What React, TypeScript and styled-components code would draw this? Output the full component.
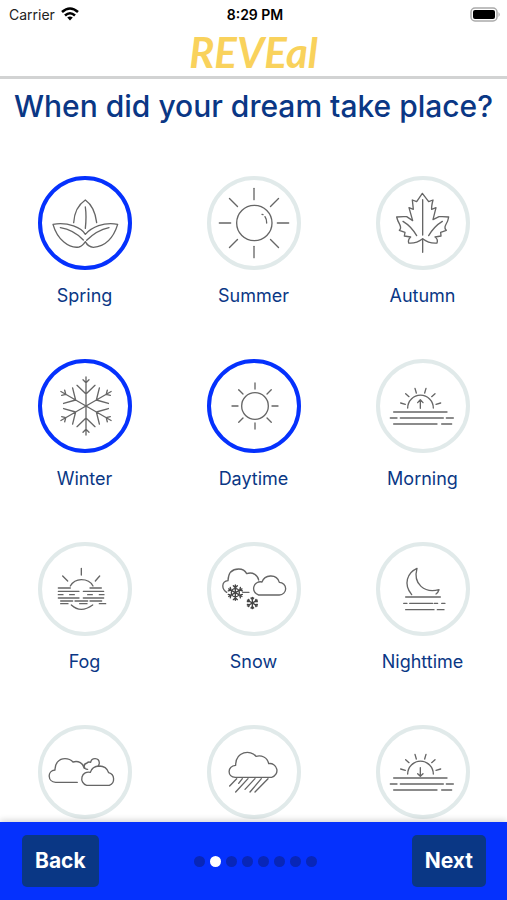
import React, { useState } from "react";
import styled, { createGlobalStyle } from "styled-components";

const GlobalStyle = createGlobalStyle`
  * { box-sizing: border-box; }
  body { margin: 0; background: #fff; font-family: Inter, "Liberation Sans", sans-serif; }
  button { font-family: inherit; border: 0; cursor: pointer; }
`;

const navy = "#0a3785";
const blue = "#0531fd";

const Screen = styled.div`
  display: flex;
  flex-direction: column;
  height: 100vh;
  overflow: hidden;
`;

const StatusBar = styled.div`
  display: grid;
  grid-template-columns: 1fr auto 1fr;
  align-items: center;
  height: 28px;
  padding: 0 6px 0 9px;
  font-size: 14px;
  color: #222;
`;

const Carrier = styled.span`
  display: flex;
  align-items: center;
  gap: 6px;
`;

const Clock = styled.time`
  font-weight: 600;
  color: #000;
`;

const Battery = styled.svg`
  justify-self: end;
`;

const Brand = styled.header`
  display: flex;
  justify-content: center;
  border-bottom: 3px solid #d2d3d3;
`;

const Wordmark = styled.span`
  font-family: Lato, sans-serif;
  font-style: italic;
  font-weight: 700;
  font-size: 42px;
  line-height: 48px;
  color: #f9d25c;
`;

const Content = styled.main`
  flex: 1;
  min-height: 0;
  overflow-y: auto;
  scrollbar-width: none;
  padding: 7px 0 50px;
`;

const Title = styled.h1`
  margin: 0 0 50px;
  font-size: 30px;
  line-height: 40px;
  font-weight: 500;
  text-align: center;
  color: ${navy};
`;

const Choices = styled.div`
  display: grid;
  grid-template-columns: repeat(3, 1fr);
  row-gap: 50px;
  justify-items: center;
`;

const Choice = styled.button`
  display: flex;
  flex-direction: column;
  align-items: center;
  gap: 13px;
  padding: 0;
  background: none;
  font-size: 18px;
  line-height: 26px;
  color: ${navy};
`;

const Ring = styled.span<{ $selected: boolean }>`
  display: flex;
  width: 94px;
  height: 94px;
  border-radius: 50%;
  border: 4px solid ${(p) => (p.$selected ? blue : "#e1eaea")};
`;

const Drawing = styled.svg`
  flex: 1;
  fill: none;
  stroke: #666;
  stroke-width: 4;
  stroke-linecap: round;
  stroke-linejoin: round;
`;

const Footer = styled.footer`
  position: relative;
  display: flex;
  align-items: center;
  justify-content: space-between;
  padding: 13px 21px 13px 22px;
  background: ${blue};
  box-shadow: 0 -2px 6px rgba(0, 0, 0, 0.16);
`;

const NavButton = styled.button`
  padding: 13px;
  border-radius: 5px;
  background: ${navy};
  color: #fff;
  font-size: 21px;
  line-height: 26px;
  font-weight: 700;
`;

const Dots = styled.div`
  display: flex;
  gap: 5px;
`;

const Dot = styled.span<{ $current: boolean }>`
  width: 11px;
  height: 11px;
  border-radius: 50%;
  background: ${(p) => (p.$current ? "#fff" : "#0826b8")};
`;

const range = (n: number) => Array.from({ length: n }, (_, i) => i);

const rays = (cx: number, cy: number, inner: number, outer: number) =>
  range(8).map((i) => (
    <path key={i} d={`M${cx} ${cy - inner}V${cy - outer}`} transform={`rotate(${i * 45} ${cx} ${cy})`} />
  ));

const flake = (cx: number, cy: number, arm: string) =>
  range(6).map((i) => <path key={i} d={arm} transform={`translate(${cx} ${cy}) rotate(${i * 60})`} />);

const horizonLines = (
  <>
    <path d="M-88 18H72M-98 36H-78M-68 36H61M70 36H91M-88 54H42M56 54H86" />
    <path d="M-46 6A38 38 0 0 1 31 6M-67 -9L-53 -5M-52 -37L-42 -28M-24 -53L-20 -39M9 -53L5 -39M36 -37L26 -28M53 -9L39 -5" />
  </>
);

const drawings: Record<string, React.ReactNode> = {
  Spring: (
    <>
      <path d="M-34 -1C-32 -33 -20 -55 1 -69C22 -54 31 -35 35 -1M1 -48Q5 -20 1 16" />
      <path d="M1 34C-10 15 -50 -4 -96 4C-83 50 -48 77 -18 72Q-8 70 1 56Q9 72 25 73C62 70 86 43 98 4C56 -4 20 13 1 34Z" />
      <path d="M-74 14Q-35 20 -5 51M72 14Q35 22 5 52" />
    </>
  ),
  Summer: (
    <>
      <circle r="53" cx="1" />
      {rays(0, 0, 70, 104)}
      <path d="M24 -26L27 -25M33 -19Q38 -12 38 0" />
    </>
  ),
  Autumn: (
    <>
      <path d="M-2 -89L17 -64L30 -69Q25 -50 26 -41L39 -46L30 -10L48 -19Q62 -20 77 -18Q76 -8 68 6Q63 16 70 22L53 28L54 39L36 42Q46 49 42 60Q18 62 -1 47Q-20 62 -43 60Q-46 50 -37 42L-56 39L-54 28L-71 22Q-64 16 -70 4Q-77 -8 -79 -18Q-62 -20 -49 -19L-31 -7L-42 -46L-29 -41L-32 -69L-19 -64Z" />
      <path d="M-1 -70V36M-1 48V88M-60 -5Q-35 10 -19 38M58 -5Q33 10 17 38" />
    </>
  ),
  Winter: flake(3, 0, "M0 0V-87M0 -36L-27 -62M0 -36L27 -62M0 -70L-9 -79M0 -70L9 -79"),
  Daytime: (
    <>
      <circle r="40" cx="3" />
      {rays(3, 0, 51, 69)}
    </>
  ),
  Morning: (
    <>
      {horizonLines}
      <path d="M-8 7V-18M-16 -10L-8 -19L0 -10" />
    </>
  ),
  Fog: (
    <>
      <path d="M-44 -9Q-33 -28 -11 -28Q14 -28 24 -9M-41 48Q-13 74 23 48M-11 -62V-42M-67 -39L-52 -24M44 -39L31 -24" />
      <path d="M-80 -3H-44M15 -3H49M-80 7H-18M-5 7H56M-80 17H-66M-46 17H-32M8 17H22M43 17H57M-80 27H-18M-5 27H56M-73 36H-37M-30 36H8M15 36H50M-73 44H-51M-16 44H6M43 44H62" />
    </>
  ),
  Snow: (
    <>
      <path d="M-82 10C-98 0 -98 -23 -78 -25C-77 -51 -62 -60 -46 -60Q-29 -60 -22 -46C-3 -53 12 -40 14 -27M-34 10H-15" />
      <path d="M14 18H76A19 19 0 0 0 76 -20Q70 -40 49 -39Q30 -38 24 -21A20 20 0 0 0 14 18Z" />
      <g stroke="#444">
        <circle cx="-56" cy="11" r="12" />
        {flake(-56, 11, "M0 0V-23M0 -15L-6 -21M0 -15L6 -21")}
        {flake(-5, 42, "M0 0V-17M0 -10L-4 -15M0 -10L4 -15")}
      </g>
    </>
  ),
  Nighttime: (
    <>
      <path d="M-34 17C-60 -15 -47 -49 -18 -62C-31 -15 5 14 48 2Q45 11 39 15" />
      <path d="M-52 24H52M-58 43H-48M-40 43H29M34 43H44M56 43H66M-52 62H33M43 62H63" />
    </>
  ),
  Cloudy: (
    <>
      <path d="M-23 31H-88C-113 29 -114 -4 -90 -6C-91 -26 -78 -40 -60 -40Q-45 -40 -36 -30C-20 -35 -5 -26 -2 -11" />
      <path d="M8 -8C-5 -8 -6 -24 6 -27Q10 -32 17 -29C20 -44 42 -44 43 -27Q43 -23 40 -19" />
      <path d="M5 40H73A20 20 0 0 0 71 2Q64 -18 43 -18Q21 -17 16 1A20 20 0 0 0 5 40Z" />
    </>
  ),
  Rain: (
    <>
      <path d="M-56 16H53A21 21 0 0 0 44 -25C40 -45 22 -51 6 -47C-10 -68 -55 -62 -55 -20C-81 -17 -81 15 -56 16Z" />
      <path d="M-52 20L-73 42M-35 20L-46 34M-18 20L-55 60M3 20L-27 52M22 20L-12 60M42 20L3 60" />
    </>
  ),
  Evening: (
    <>
      {horizonLines}
      <path d="M-8 -13V12M-16 5L-8 13L0 5" />
    </>
  ),
};

const captioned = ["Spring", "Summer", "Autumn", "Winter", "Daytime", "Morning", "Fog", "Snow", "Nighttime"];
const names = [...captioned, "Cloudy", "Rain", "Evening"];

export default function App() {
  const [selected, setSelected] = useState(["Spring", "Winter", "Daytime"]);
  const toggle = (name: string) =>
    setSelected((s) => (s.includes(name) ? s.filter((n) => n !== name) : [...s, name]));

  return (
    <Screen>
      <GlobalStyle />
      <StatusBar>
        <Carrier>
          Carrier
          <svg width="18" height="14" viewBox="0 0 18 14" fill="none" stroke="#000" strokeWidth="2.6">
            <path d="M1 5Q9 -2 17 5M4 8.5Q9 4 14 8.5" />
            <path d="M6.2 10.6Q9 8.4 11.8 10.6L9 13.6Z" fill="#000" stroke="none" />
          </svg>
        </Carrier>
        <Clock>8:29 PM</Clock>
        <Battery width="31" height="15" viewBox="0 0 31 15">
          <rect x="1" y="1" width="26" height="13" rx="4" fill="#fff" stroke="#aaa" strokeWidth="1.5" />
          <rect x="3" y="3" width="22" height="9" rx="2" />
          <path d="M28.5 5Q31 7.5 28.5 10Z" fill="#aaa" />
        </Battery>
      </StatusBar>
      <Brand>
        <Wordmark>REVEal</Wordmark>
      </Brand>
      <Content>
        <Title>When did your dream take place?</Title>
        <Choices>
          {names.map((name) => (
            <Choice
              key={name}
              type="button"
              aria-label={name}
              aria-pressed={selected.includes(name)}
              onClick={() => toggle(name)}
            >
              <Ring $selected={selected.includes(name)}>
                <Drawing viewBox="-129 -129 258 258" aria-hidden="true">
                  {drawings[name]}
                </Drawing>
              </Ring>
              {captioned.includes(name) && <span>{name}</span>}
            </Choice>
          ))}
        </Choices>
      </Content>
      <Footer>
        <NavButton type="button">Back</NavButton>
        <Dots>
          {range(8).map((i) => (
            <Dot key={i} $current={i === 1} />
          ))}
        </Dots>
        <NavButton type="button">Next</NavButton>
      </Footer>
    </Screen>
  );
}
